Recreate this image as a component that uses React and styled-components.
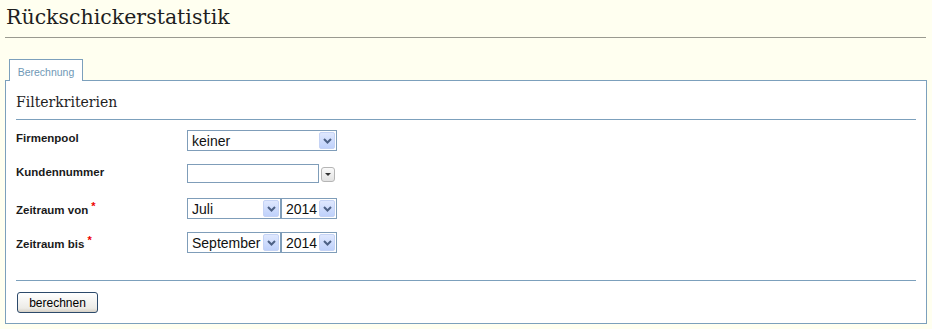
import React from "react";
import styled, { createGlobalStyle } from "styled-components";

const Global = createGlobalStyle`
  html, body { margin: 0; padding: 0; background: #fffff0; }
  body { font-family: "Liberation Sans", Arial, sans-serif; color: #222; }
`;

const Page = styled.div`
  padding: 0 6px 0 5px;
  width: 921px;
`;

const Title = styled.h1`
  margin: 0;
  padding: 4px 0 0 1px;
  box-sizing: border-box;
  font-family: "DejaVu Serif", Georgia, serif;
  font-weight: normal;
  font-size: 20.5px;
  line-height: 26px;
  color: #1e1e1e;
  border-bottom: 1px solid #9a9a90;
  height: 38px;
`;

const TabBar = styled.div`
  display: flex;
  padding: 21px 0 0 4px;
  position: relative;
  z-index: 1;
  margin-bottom: -1px;
`;

const Tab = styled.div`
  box-sizing: border-box;
  height: 22px;
  width: 74px;
  border: 1px solid #7ca0bc;
  border-bottom: none;
  background: #fff;
  color: #6f98b6;
  font-family: "Liberation Sans", Tahoma, sans-serif;
  font-size: 10.5px;
  text-align: center;
  padding-top: 6px;
`;

const Panel = styled.div`
  box-sizing: border-box;
  width: 922px;
  height: 244px;
  border: 1px solid #7ca0bc;
  background: #fff;
  padding: 0 10px;
`;

const SectionTitle = styled.h2`
  margin: 0;
  padding-top: 12px;
  height: 39px;
  box-sizing: border-box;
  font-family: "DejaVu Serif", Georgia, serif;
  font-weight: normal;
  font-size: 14px;
  line-height: 18px;
  color: #1e1e1e;
  border-bottom: 1px solid #7ca0bc;
`;

const Form = styled.div`
  display: grid;
  grid-template-columns: 171px 1fr;
  grid-auto-rows: 34px;
  padding-top: 10px;
  height: 161px;
  box-sizing: border-box;
  border-bottom: 1px solid #7ca0bc;
`;

const Label = styled.div`
  font-weight: bold;
  font-size: 11.5px;
  color: #1a1a1a;
  padding-top: 2px;
`;

const Req = styled.sup`
  color: #e00;
  font-size: 11px;
  margin-left: 3px;
  vertical-align: 4px;
`;

const Controls = styled.div`
  display: flex;
  align-items: flex-start;
`;

const SelectBox = styled.div`
  box-sizing: border-box;
  width: ${(p) => p.$w}px;
  height: 21px;
  border: 1px solid #7f9db9;
  background: #fff;
  display: flex;
  align-items: center;
  padding: 0 1px 0 4px;
  font-size: 14px;
  color: #111;
`;

const SelectText = styled.span`
  flex: 1;
  white-space: nowrap;
  overflow: hidden;
`;

const ArrowBtn = styled.span`
  box-sizing: border-box;
  width: 16px;
  height: 17px;
  border: 1px solid #c5d3f5;
  border-radius: 2px;
  background: linear-gradient(#dfe8fe, #bfd1fb);
  display: flex;
  align-items: center;
  justify-content: center;
`;

const TextInput = styled.div`
  box-sizing: border-box;
  width: 132px;
  height: 19px;
  border: 1px solid #7f9db9;
  background: #fff;
`;

const ComboBtn = styled.span`
  box-sizing: border-box;
  width: 14px;
  height: 15px;
  margin: 3px 0 0 2px;
  border: 1px solid #b5b5b5;
  border-radius: 3px;
  background: linear-gradient(#fafafa, #e2e2e2);
  display: flex;
  align-items: center;
  justify-content: center;
`;

const Footer = styled.div`
  padding-top: 11px;
`;

const Button = styled.button`
  box-sizing: border-box;
  width: 81px;
  height: 21px;
  margin-left: 1px;
  border: 1px solid #2c4a6b;
  border-radius: 3px;
  background: linear-gradient(#ffffff, #ecebe6 80%, #d6d0c5);
  font-family: "Liberation Sans", Tahoma, sans-serif;
  font-size: 12px;
  color: #000;
  padding: 0;
  cursor: pointer;
`;

const Chevron = () => (
  <svg width="9" height="6" viewBox="0 0 9 6">
    <path d="M1 1 L4.5 4.5 L8 1" fill="none" stroke="#4d6185" strokeWidth="2" />
  </svg>
);

const Tri = () => (
  <svg width="6" height="3" viewBox="0 0 6 3">
    <path d="M0 0 H6 L3 3 Z" fill="#333" />
  </svg>
);

const Select = ({ w, value }) => (
  <SelectBox $w={w}>
    <SelectText>{value}</SelectText>
    <ArrowBtn>
      <Chevron />
    </ArrowBtn>
  </SelectBox>
);

export default function App() {
  return (
    <>
      <Global />
      <Page>
        <Title>Rückschickerstatistik</Title>
        <TabBar>
          <Tab>Berechnung</Tab>
        </TabBar>
        <Panel>
          <SectionTitle>Filterkriterien</SectionTitle>
          <Form>
            <Label>Firmenpool</Label>
            <Controls>
              <Select w={150} value="keiner" />
            </Controls>
            <Label>Kundennummer</Label>
            <Controls>
              <TextInput />
              <ComboBtn>
                <Tri />
              </ComboBtn>
            </Controls>
            <Label>
              Zeitraum von<Req>*</Req>
            </Label>
            <Controls>
              <Select w={94} value="Juli" />
              <Select w={56} value="2014" />
            </Controls>
            <Label>
              Zeitraum bis<Req>*</Req>
            </Label>
            <Controls>
              <Select w={94} value="September" />
              <Select w={56} value="2014" />
            </Controls>
          </Form>
          <Footer>
            <Button>berechnen</Button>
          </Footer>
        </Panel>
      </Page>
    </>
  );
}
